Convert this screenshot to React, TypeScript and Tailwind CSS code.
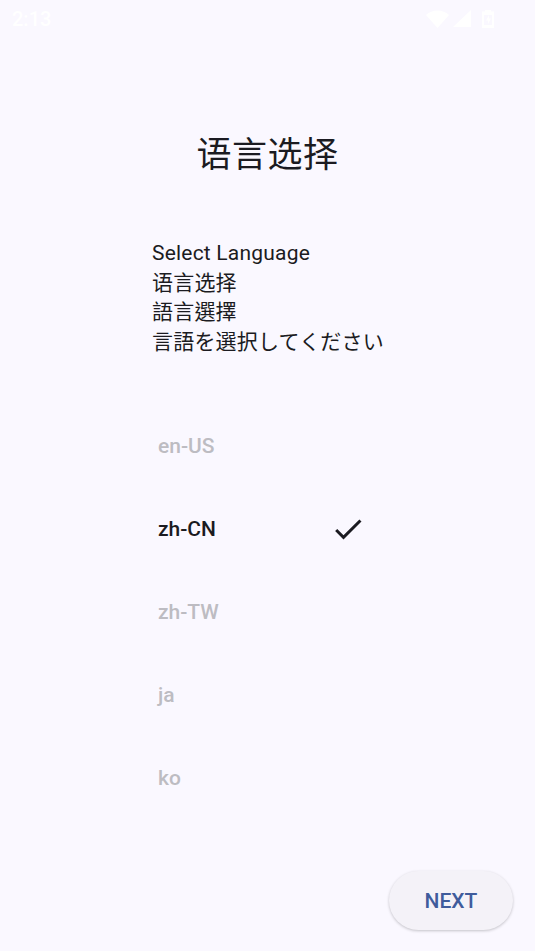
const rows = ["en-US", "zh-CN", "zh-TW", "ja", "ko"];

export default function App() {
  return (
    <div className="flex h-[951px] w-[535px] flex-col overflow-hidden bg-[#faf8ff] font-['Roboto','Noto_Sans_CJK_SC',sans-serif] text-[#1b1b21]">
      <div className="flex h-[38px] items-center justify-between pl-[12px] pr-[40px] text-white">
        <span className="text-[20px] font-medium leading-none">2:13</span>
        <div className="flex items-center gap-[3px]">
          <svg width="23" height="20" viewBox="0 0 23 20" fill="currentColor"><path d="M0 6 C6 0 17 0 23 6 L11.500 19 Z" /></svg>
          <svg width="20" height="20" viewBox="0 0 20 20" fill="currentColor"><path d="M19 1 V18 H1 Z" /></svg>
          <svg className="ml-[6px]" width="14" height="20" viewBox="0 0 14 20" fill="currentColor"><path fillRule="evenodd" d="M4 1 H10 V2.500 H13 V19 H1 V2.500 H4 Z M3 6 V16 H11 V6 Z" /><path d="M8 6 L5 11.500 H7 V15 L10 9.500 H8 Z" /></svg>
        </div>
      </div>
      <div className="flex flex-1 flex-col items-center">
        <h1 className="mt-[94px] text-center text-[35px] font-normal leading-[48px] tracking-[0.5px]">语言选择</h1>
        <div className="mt-[59px] w-[231px] whitespace-nowrap text-[21px] leading-[29.500px] tracking-[0.2px]">
          <div>Select Language</div>
          <div>语言选择</div>
          <div className="font-['Roboto','Noto_Sans_CJK_TC',sans-serif]">語言選擇</div>
          <div className="font-['Roboto','Noto_Sans_CJK_JP',sans-serif]">言語を選択してください</div>
        </div>
        <div className="mt-[48px] flex w-[231px] flex-col">
          {rows.map((r) => {
            const on = r === "zh-CN";
            return (
              <div key={r} className="flex h-[83px] items-center justify-between pl-[6px] pr-[17px]">
                <span className={on ? "text-[21px] font-medium text-[#1b1b21]" : "text-[21px] font-medium text-[#bdbcc2]"}>{r}</span>
                {on && (
                  <svg className="mb-[2px]" width="36" height="36" viewBox="0 0 24 24" fill="#1b1b21"><path d="M9 16.170 4.830 12l-1.420 1.410L9 19 21 7l-1.410-1.410z" /></svg>
                )}
              </div>
            );
          })}
        </div>
        <div className="mt-[51px] flex w-full justify-end pr-[22px]">
          <button className="h-[59px] w-[124px] rounded-full bg-[#f4f2f8] pt-[2px] text-[21px] font-medium text-[#3f5c9c] shadow-[0_1px_3px_0px_rgba(0,0,0,0.22)]">NEXT</button>
        </div>
      </div>
    </div>
  );
}
